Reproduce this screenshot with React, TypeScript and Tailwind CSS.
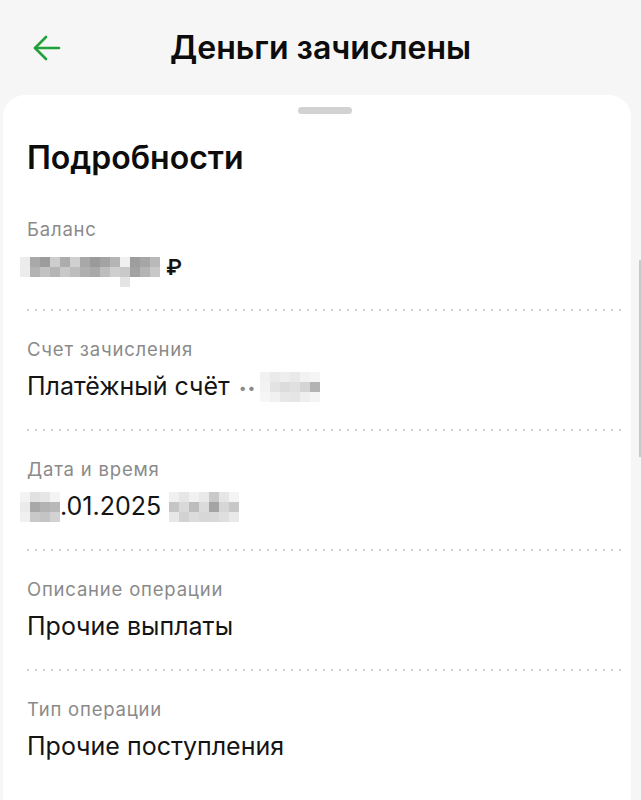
import React from "react";

// pixelated (censored) blocks, each cell 10px, values are grey levels
type Cells = (string | null)[][];

function Mosaic({ cells, size = 10, className = "" }: { cells: Cells; size?: number; className?: string }) {
    return <div className={"inline-flex flex-col " + className}>
        {cells.map((row, i) => (
            <div key={i} className="flex">
                {row.map((c, j) => (
                    <div key={j} style={{ width: size, height: size, backgroundColor: c ?? "transparent" }} />
                ))}
            </div>
        ))}
    </div>;
}

const balanceCells: Cells = [
    ["#ececec", "#a9a9a9", "#9c9c9c", "#cdcdcd", "#acacac", "#d0d0d0", "#a8a8a8", "#9a9a9a", "#a3a3a3", "#b5b5b5", "#f0f0f0", "#9d9d9d", "#a6a6a6", "#b9b9b9"],
    ["#ececec", "#b3b3b3", "#c2c2c2", "#b5b5b5", "#c8c8c8", "#bdbdbd", "#afafaf", "#a9a9a9", "#bdbdbd", "#cfcfcf", "#c9c9c9", "#a2a2a2", "#b4b4b4", "#c8c8c8"],
    [null, null, null, null, null, null, null, null, null, null, "#e4e4e4", null, null, null],
];

const accountCells: Cells = [
    ["#f1f1f1", "#eaeaea", "#eeeeee", "#e9e9e9", "#f2f2f2", "#f5f5f5"],
    ["#f3f3f3", "#e3e3e3", "#dcdcdc", "#e0e0e0", "#d5d5d5", "#b3b3b3"],
    ["#f6f6f6", "#f1f1f1", "#e7e7e7", "#e5e5e5", "#efefef", "#f4f4f4"],
];

const dayCells: Cells = [
    ["#f3f3f3", "#e1e1e1", "#e6e6e6", "#f4f4f4"],
    ["#ebebeb", "#a8a8a8", "#b3b3b3", "#b9b9b9"],
    ["#f0f0f0", "#c9c9c9", "#c4c4c4", "#d2d2d2"],
];

const timeCells: Cells = [
    ["#f0f0f0", "#e6e6e6", "#f1f1f1", "#e9e9e9", "#c9c9c9", "#e6e6e6", "#f4f4f4"],
    ["#c5c5c5", "#d9d9d9", "#bdbdbd", "#dbdbdb", "#a4a4a4", "#d6d6d6", "#c7c7c7"],
    ["#e7e7e7", "#d2d2d2", "#dcdcdc", "#d7d7d7", "#d9d9d9", "#dfdfdf", "#e9e9e9"],
];

function Dots() {
    return <div className="h-[2px] bg-[linear-gradient(to_right,#cdcdcd_2px,transparent_2px)] bg-[length:8px_2px] bg-repeat-x" />;
}

function Row({ label, children, last }: { label: string; children: React.ReactNode; last?: boolean }) {
    return <div className="pt-[28px]">
        <div className="text-[18.5px] leading-[20px] text-[#8a8a8a] tracking-[0.8px]">{label}</div>
        <div className="mt-[12px] h-[32px] flex items-center text-[25px] text-[#141414]">{children}</div>
        {!last && <div className="pt-[26px]"><Dots /></div>}
    </div>;
}

export default function App() {
    return <div className="w-[641px] h-[800px] bg-[#f6f6f6] overflow-hidden relative font-['Inter',sans-serif]">
        <div className="h-[95px] grid grid-cols-[1fr_auto_1fr] items-center">
            <div className="pl-[32px]">
                <svg width="30" height="28" viewBox="0 0 30 28" fill="none" stroke="#22a03a" strokeWidth="2.6" strokeLinecap="round" strokeLinejoin="round">
                    <path d="M27 14H3" />
                    <path d="M14 3L3 14L14 25" />
                </svg>
            </div>
            <h1 className="font-semibold text-[32px] leading-none text-[#0c0c0c]">Деньги зачислены</h1>
            <div />
        </div>

        <div className="ml-[3px] mr-[10px] bg-white rounded-t-[22px] pl-[24px] pr-[8px] h-[720px]">
            <div className="pt-[12px] flex justify-center">
                <div className="w-[54px] h-[7px] rounded-full bg-[#d2d2d2]" />
            </div>
            <h2 className="mt-[26px] font-semibold text-[32px] leading-[36px] text-[#0c0c0c]">Подробности</h2>

            <div className="mt-[15px]">
                <Row label="Баланс">
                    <Mosaic cells={balanceCells} className="-ml-[7px] mt-[10px]" />
                    <span className="ml-[6px] font-semibold text-[22px]">₽</span>
                </Row>
                <Row label="Счет зачисления">
                    <span>Платёжный счёт</span>
                    <span className="ml-[9px] text-[14px] text-[#8a8a8a] tracking-[1px]">••</span>
                    <Mosaic cells={accountCells} className="ml-[4px]" />
                </Row>
                <Row label="Дата и время">
                    <Mosaic cells={dayCells} className="-ml-[7px]" />
                    <span>.01.2025</span>
                    <Mosaic cells={timeCells} className="ml-[8px]" />
                </Row>
                <Row label="Описание операции">
                    <span>Прочие выплаты</span>
                </Row>
                <Row label="Тип операции" last>
                    <span>Прочие поступления</span>
                </Row>
            </div>
        </div>

        <div className="absolute right-0 top-[260px] w-[2px] h-[197px] bg-[#c9c9c9]" />
    </div>;
}
